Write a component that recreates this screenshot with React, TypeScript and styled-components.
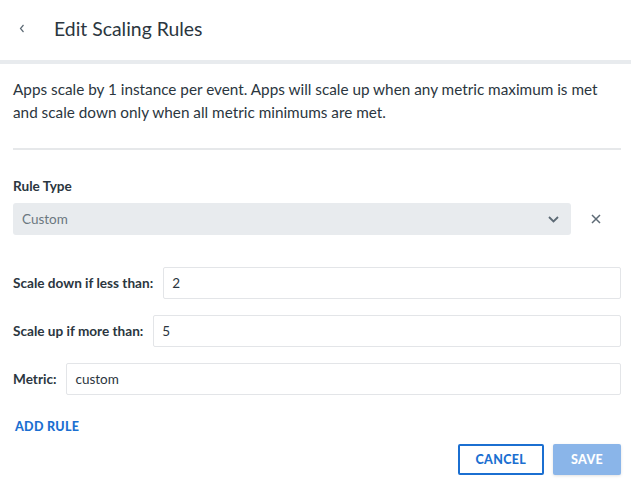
import React from "react";
import styled, { createGlobalStyle } from "styled-components";

const Global = createGlobalStyle`
  html, body { margin: 0; padding: 0; background: #fff; }
  body { font-family: "Lato", "Open Sans", sans-serif; color: #2b3640; }
  * { box-sizing: border-box; }
`;

const Page = styled.div`
  width: 631px;
  height: 487px;
  display: flex;
  flex-direction: column;
  overflow: hidden;
`;

const Header = styled.header`
  height: 64px;
  display: flex;
  align-items: center;
  padding: 0 0 4px 17px;
  border-bottom: 4px solid #e8ebee;
  gap: 27px;
`;

const BackButton = styled.button`
  border: none;
  background: none;
  padding: 0;
  width: 10px;
  height: 20px;
  display: flex;
  align-items: center;
  justify-content: center;
  color: #5d6a75;
  cursor: pointer;
`;

const Title = styled.h1`
  margin: 0;
  font-size: 19.4px;
  font-weight: 400;
  color: #2b3640;
`;

const Body = styled.div`
  padding: 14px 10px 0 13px;
  display: flex;
  flex-direction: column;
`;

const Description = styled.p`
  margin: 0;
  font-size: 15.3px;
  line-height: 23px;
  color: #2b3640;
  padding-bottom: 24px;
  border-bottom: 2px solid #e6e8ea;
`;

const Label = styled.label`
  font-size: 13.6px;
  font-weight: 700;
  color: #2b3640;
  line-height: 18px;
  white-space: nowrap;
`;

const RuleTypeBlock = styled.div`
  margin-top: 27px;
  display: flex;
  flex-direction: column;
  gap: 8px;
`;

const SelectRow = styled.div`
  display: flex;
  align-items: center;
`;

const Select = styled.div`
  flex: 1;
  height: 32px;
  background: #e8ebee;
  border-radius: 3px;
  display: flex;
  align-items: center;
  justify-content: space-between;
  padding: 0 12px 0 9px;
  font-size: 13.5px;
  color: #6b7780;
`;

const RemoveButton = styled.button`
  width: 50px;
  height: 32px;
  border: none;
  background: none;
  padding: 0;
  display: flex;
  align-items: center;
  justify-content: center;
  color: #5d6a75;
`;

const Fields = styled.div`
  margin-top: 32px;
  display: flex;
  flex-direction: column;
  gap: 16px;
`;

const FieldRow = styled.div`
  display: flex;
  align-items: center;
  gap: 10px;
`;

const Input = styled.div`
  flex: 1;
  height: 32px;
  border: 1px solid #e3e5e8;
  border-radius: 2px;
  display: flex;
  align-items: center;
  padding: 0 8px;
  font-size: 13.5px;
  color: #2b3640;
`;

const AddRule = styled.button`
  align-self: flex-start;
  margin-top: 24px;
  margin-left: 2px;
  border: none;
  background: none;
  padding: 0;
  font-family: inherit;
  font-size: 12.5px;
  font-weight: 900;
  letter-spacing: 0.3px;
  color: #1b6fd1;
  line-height: 16px;
`;

const Actions = styled.div`
  margin-top: 9px;
  display: flex;
  justify-content: flex-end;
  gap: 9px;
`;

const ActionButton = styled.button<{ $primary?: boolean }>`
  height: 31px;
  padding: 0 16px;
  min-width: ${(p) => (p.$primary ? "68px" : "86px")};
  font-family: inherit;
  font-size: 12.5px;
  font-weight: 900;
  letter-spacing: 0.3px;
  border-radius: 2px;
  border: ${(p) => (p.$primary ? "none" : "2px solid #1b6fd1")};
  background: ${(p) => (p.$primary ? "#8ab5e9" : "#fff")};
  color: ${(p) => (p.$primary ? "#fff" : "#1b6fd1")};
  box-shadow: ${(p) => (p.$primary ? "0 1px 3px rgba(0,0,0,0.12)" : "none")};
`;

export default function App() {
  return (
    <Page>
      <Global />
      <Header>
        <BackButton aria-label="Back">
          <svg width="6" height="9" viewBox="0 0 6 9" fill="none">
            <path d="M4.5 1 L1.5 4.5 L4.5 8" stroke="currentColor" strokeWidth="1.2" />
          </svg>
        </BackButton>
        <Title>Edit Scaling Rules</Title>
      </Header>
      <Body>
        <Description>
          Apps scale by 1 instance per event. Apps will scale up when any metric maximum is met
          and scale down only when all metric minimums are met.
        </Description>
        <RuleTypeBlock>
          <Label>Rule Type</Label>
          <SelectRow>
            <Select>
              <span>Custom</span>
              <svg width="11" height="7" viewBox="0 0 11 7" fill="none">
                <path d="M1 1 L5.5 5.5 L10 1" stroke="#5d6a75" strokeWidth="1.8" />
              </svg>
            </Select>
            <RemoveButton aria-label="Remove">
              <svg width="10" height="10" viewBox="0 0 10 10" fill="none">
                <path d="M1 1 L9 9 M9 1 L1 9" stroke="currentColor" strokeWidth="1.5" />
              </svg>
            </RemoveButton>
          </SelectRow>
        </RuleTypeBlock>
        <Fields>
          <FieldRow>
            <Label>Scale down if less than:</Label>
            <Input>2</Input>
          </FieldRow>
          <FieldRow>
            <Label>Scale up if more than:</Label>
            <Input>5</Input>
          </FieldRow>
          <FieldRow>
            <Label>Metric:</Label>
            <Input>custom</Input>
          </FieldRow>
        </Fields>
        <AddRule>ADD RULE</AddRule>
        <Actions>
          <ActionButton>CANCEL</ActionButton>
          <ActionButton $primary>SAVE</ActionButton>
        </Actions>
      </Body>
    </Page>
  );
}
